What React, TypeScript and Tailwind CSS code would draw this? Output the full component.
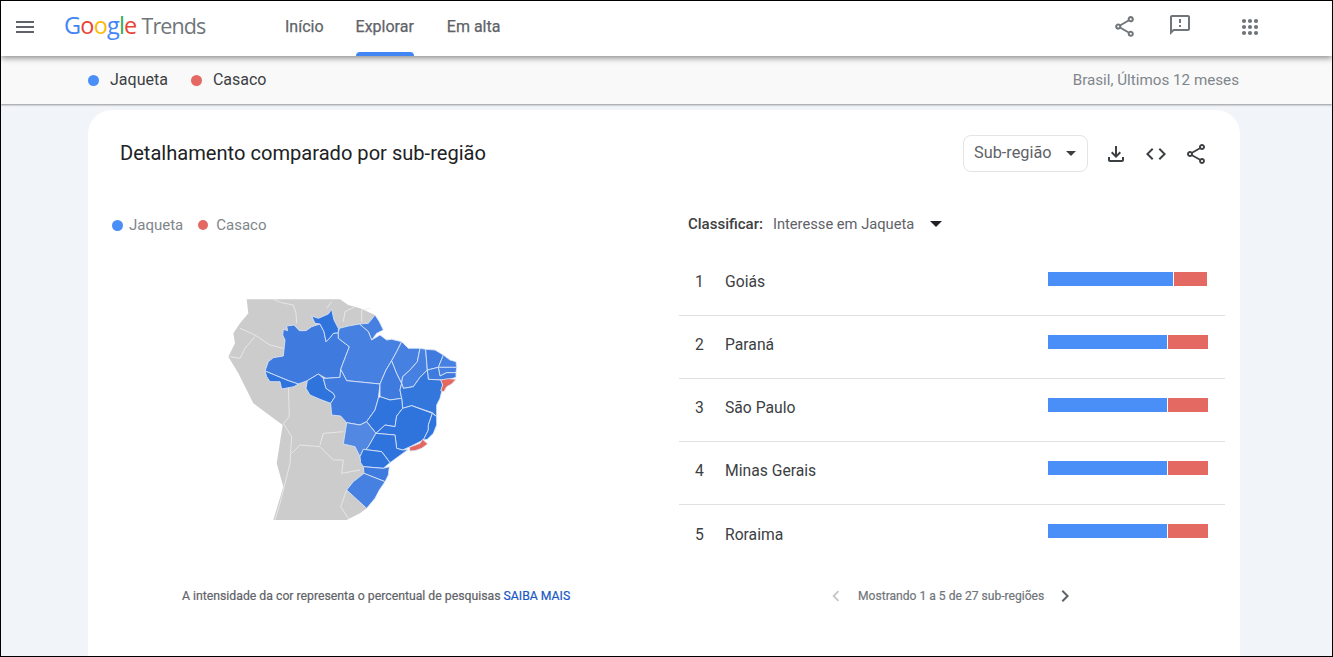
import React from 'react';

const FONT = "font-['Roboto','Noto_Sans',sans-serif]";

const BASE = '#3f7bdf';
const LIGHT = '#4680e0';
const DARK = '#2f73dd';
const RED = '#e4685f';

const states: { d: string; fill: string }[] = [
  { d: 'M190,118 L203,122 200,108 222,105 238,122 258,122 275,110 300,102 312,125 318,155 330,143 340,130 355,128 355,145 388,170 362,238 360,262 318,265 295,252 262,272 235,282 205,272 135,243 145,215 160,203 190,198 195,150 188,135 Z', fill: BASE },
  { d: 'M275,78 L295,85 325,72 335,58 342,90 355,115 355,128 340,130 330,143 318,155 312,125 300,102 285,100 Z', fill: DARK },
  { d: 'M418,102 L445,100 465,75 478,95 490,120 470,130 455,150 445,125 430,112 Z', fill: LIGHT },
  { d: 'M355,128 L358,115 385,108 418,102 430,112 445,125 455,150 480,135 500,150 515,148 545,155 530,185 515,212 498,240 480,282 380,272 362,238 388,170 355,145 Z', fill: LIGHT },
  { d: 'M135,243 L205,272 235,282 222,290 185,297 180,275 150,275 140,260 Z', fill: DARK },
  { d: 'M262,272 L295,252 310,265 318,295 340,310 345,320 332,340 300,328 270,315 258,295 Z', fill: DARK },
  { d: 'M318,265 L360,262 362,238 380,272 480,282 475,325 465,360 440,395 420,405 380,398 362,378 335,375 332,340 345,320 340,310 318,295 310,265 Z', fill: BASE },
  { d: 'M515,212 L530,250 545,280 540,300 545,325 510,330 480,320 480,282 498,240 Z', fill: BASE },
  { d: 'M545,155 L565,175 600,175 592,215 570,240 548,260 545,280 530,250 515,212 530,185 Z', fill: LIGHT },
  { d: 'M600,175 L617,178 622,240 600,262 580,290 550,295 545,280 548,260 570,240 592,215 Z', fill: LIGHT },
  { d: 'M617,178 L645,180 670,195 655,232 622,240 Z', fill: BASE },
  { d: 'M670,195 L690,210 708,215 710,232 655,232 Z', fill: LIGHT },
  { d: 'M655,232 L710,232 708,248 680,248 660,258 Z', fill: LIGHT },
  { d: 'M622,240 L655,232 660,258 680,248 708,248 708,262 680,270 665,270 625,268 Z', fill: BASE },
  { d: 'M545,325 L540,300 545,280 550,295 580,290 600,262 622,240 625,268 665,270 668,285 665,305 660,325 650,345 650,380 637,368 575,347 548,355 Z', fill: '#3377dd' },
  { d: 'M480,320 L510,330 545,325 548,355 530,378 525,410 495,405 468,430 440,395 465,360 475,325 Z', fill: DARK },
  { d: 'M548,355 L575,347 637,370 625,405 625,420 610,450 570,470 548,480 530,475 525,435 468,430 495,405 525,410 530,378 Z', fill: DARK },
  { d: 'M637,370 L650,380 650,405 640,430 622,448 610,450 625,420 625,405 Z', fill: DARK },
  { d: 'M380,398 L420,405 440,395 468,430 445,470 420,500 405,470 370,462 Z', fill: '#5288e2' },
  { d: 'M468,430 L525,435 530,475 548,480 565,478 510,518 485,485 430,478 420,500 445,470 Z', fill: DARK },
  { d: 'M430,478 L485,485 510,518 490,535 430,530 422,518 420,500 Z', fill: DARK },
  { d: 'M430,530 L490,535 508,530 505,555 495,575 432,550 Z', fill: BASE },
  { d: 'M432,550 L495,575 478,600 465,625 440,655 380,600 400,575 Z', fill: LIGHT },
  { d: 'M662,270 L685,266 708,268 695,282 680,290 672,305 662,302 668,285 Z', fill: RED },
  { d: 'M568,472 L600,460 608,448 623,462 605,475 585,482 570,483 Z', fill: RED },
];

const borders = [
  'M160,28 L185,38 220,45 228,70 230,100',
  'M320,55 L335,35',
  'M370,95 L375,65 405,50',
  'M425,95 L425,60 450,55',
  'M60,115 L105,135 150,165 190,175',
  'M30,200 L60,205 75,175 105,140',
  'M205,280 L208,380 190,400',
  'M190,400 L215,440 210,520 180,640 165,690',
  'M300,465 L310,430 370,425',
  'M215,490 L240,465 300,470 340,510 370,510 365,550 420,540',
  'M380,600 L362,650 385,685',
];

const rows = [
  { name: 'Goiás', blue: 125, red: 33 },
  { name: 'Paraná', blue: 119, red: 40 },
  { name: 'São Paulo', blue: 119, red: 40 },
  { name: 'Minas Gerais', blue: 119, red: 40 },
  { name: 'Roraima', blue: 119, red: 40 },
];

const Icon: React.FC<{ d: string; className: string }> = ({ d, className }) => (
  <svg viewBox="0 0 24 24" className={className} fill="currentColor">
    <path d={d} />
  </svg>
);

const SHARE =
  'M18 16.08c-.76 0-1.44.3-1.96.77L8.91 12.7c.05-.23.09-.46.09-.7s-.04-.47-.09-.7l7.05-4.11c.54.5 1.25.81 2.04.81 1.66 0 3-1.34 3-3s-1.34-3-3-3-3 1.34-3 3c0 .24.04.47.09.7L8.04 9.81C7.5 9.31 6.79 9 6 9c-1.66 0-3 1.34-3 3s1.34 3 3 3c.79 0 1.5-.31 2.04-.81l7.12 4.16c-.05.21-.08.43-.08.65 0 1.61 1.31 2.92 2.92 2.92 1.61 0 2.92-1.31 2.92-2.92s-1.31-2.92-2.92-2.92zM18 4c.55 0 1 .45 1 1s-.45 1-1 1-1-.45-1-1 .45-1 1-1zM6 13c-.55 0-1-.45-1-1s.45-1 1-1 1 .45 1 1-.45 1-1 1zm12 7.02c-.55 0-1-.45-1-1s.45-1 1-1 1 .45 1 1-.45 1-1 1z';
const FEEDBACK =
  'M20 2H4c-1.1 0-1.99.9-1.99 2L2 22l4-4h14c1.1 0 2-.9 2-2V4c0-1.1-.9-2-2-2zm0 14H5.17L4 17.17V4h16v12zm-9-4h2v2h-2zm0-6h2v4h-2z';
const DOWNLOAD =
  'M18 15v3H6v-3H4v3c0 1.1.9 2 2 2h12c1.1 0 2-.9 2-2v-3h-2zm-1-4l-1.41-1.41L13 12.17V4h-2v8.17L8.41 9.59 7 11l5 5 5-5z';
const CODE =
  'M9.4 16.6L4.8 12l4.6-4.6L8 6l-6 6 6 6 1.4-1.4zm5.2 0l4.6-4.6-4.6-4.6L16 6l6 6-6 6-1.4-1.4z';
const CHEVRON_LEFT = 'M15.41 7.41L14 6l-6 6 6 6 1.41-1.41L10.83 12z';
const CHEVRON_RIGHT = 'M10 6L8.59 7.41 13.17 12l-4.58 4.59L10 18l6-6z';

const BrazilMap: React.FC = () => (
  <svg viewBox="0 0 750 720" className="w-[250px] h-[240px] block">
    <path
      d="M80,28 L360,28 385,45 420,55 465,75 440,655 420,670 380,690 160,690 190,590 170,520 188,405 140,370 100,340 55,250 25,200 45,160 40,130 60,100 85,70 Z"
      fill="#cccccc"
    />
    {borders.map((d) => (
      <path key={d} d={d} fill="none" stroke="#ececec" strokeWidth="2.5" />
    ))}
    {states.map((s) => (
      <path key={s.d} d={s.d} fill={s.fill} stroke="#dbe6f8" strokeWidth="2.5" strokeLinejoin="round" />
    ))}
  </svg>
);

export default function App() {
  return (
    <div className={`${FONT} w-[1333px] h-[657px] overflow-hidden border border-black bg-[#f1f4f9] flex flex-col`}>
      <header className="relative z-20 h-[55px] shrink-0 bg-white flex items-center shadow-[0_2px_6px_rgba(0,0,0,0.45)]">
        <svg viewBox="0 0 24 24" className="ml-[12px] -mt-[4px] w-[24px] h-[24px] text-[#5f6368]" fill="currentColor">
          <path d="M3 18h18v-2H3v2zm0-5h18v-2H3v2zm0-7v2h18V6H3z" />
        </svg>
        <div className="ml-[27px] w-[142px] flex items-baseline leading-none font-['Open_Sans',sans-serif] -mt-[5px]">
          <span className="text-[23.5px] tracking-[-0.8px] font-medium">
            <span className="text-[#4285f4]">G</span>
            <span className="text-[#ea4335]">o</span>
            <span className="text-[#fbbc05]">o</span>
            <span className="text-[#4285f4]">g</span>
            <span className="text-[#34a853]">l</span>
            <span className="text-[#ea4335]">e</span>
          </span>
          <span className="ml-[5px] text-[21.5px] tracking-[-0.9px] text-[#70757a]">Trends</span>
        </div>
        <nav className="ml-[79px] flex h-full text-[16px] text-[#5f6368] gap-[32px] [-webkit-text-stroke:0.25px]">
          <a className="flex items-center pb-[4px]">Início</a>
          <a className="relative flex items-center pb-[4px]">
            Explorar
            <span className="absolute left-0 right-0 bottom-0 h-[4px] rounded-t-[4px] bg-[#4285f4]" />
          </a>
          <a className="ml-[1px] flex items-center pb-[4px]">Em alta</a>
        </nav>
        <div className="ml-auto mr-[73px] -mt-[4px] flex items-center gap-[31px] text-[#70757a]">
          <Icon d={SHARE} className="w-[25px] h-[25px]" />
          <Icon d={FEEDBACK} className="w-[24px] h-[24px] -mt-[4px]" />
          <svg viewBox="0 0 18 18" className="ml-[18px] w-[18px] h-[18px]" fill="currentColor">
            {[3, 9, 15].map((y) =>
              [3, 9, 15].map((x) => <circle key={`${x}-${y}`} cx={x} cy={y} r="2.1" />)
            )}
          </svg>
        </div>
      </header>

      <div className="relative z-10 h-[48px] shrink-0 bg-[#f9f9f9] flex items-center pl-[87px] pr-[93px] text-[16px] text-[#3c4043] shadow-[0_1px_2px_rgba(0,0,0,0.4)]">
        <span className="w-[11px] h-[11px] rounded-full bg-[#4a8ef8]" />
        <span className="ml-[11px]">Jaqueta</span>
        <span className="ml-[23px] w-[11px] h-[11px] rounded-full bg-[#e46962]" />
        <span className="ml-[11px]">Casaco</span>
        <span className="ml-auto text-[15.2px] text-[#80868b]">Brasil, Últimos 12 meses</span>
      </div>

      <main className="flex-1 min-h-0 pt-[6px] pl-[87px]">
        <section className="w-[1152px] h-[560px] bg-white rounded-t-[24px]">
          <div className="flex items-center h-[62px] pt-[25px] px-[32px]">
            <h2 className="text-[20.1px] text-[#202124]">Detalhamento comparado por sub-região</h2>
            <div className="ml-auto w-[125px] h-[37px] border border-[#e3e4e6] rounded-[8px] flex items-center pl-[10px] pr-[11px] text-[16.3px] text-[#5f6368]">
              Sub-região
              <span className="ml-auto w-0 h-0 border-x-[5px] border-x-transparent border-t-[5px] border-t-[#3c4043]" />
            </div>
            <div className="ml-[16px] flex gap-[16px] text-[#3c4043]">
              <Icon d={DOWNLOAD} className="w-[24px] h-[24px]" />
              <Icon d={CODE} className="w-[24px] h-[24px]" />
              <Icon d={SHARE} className="w-[24px] h-[24px]" />
            </div>
          </div>

          <div className="flex">
            <div className="w-[591px] shrink-0">
              <div className="mt-[43px] h-[20px] pl-[24px] flex items-center text-[15px] text-[#80868b]">
                <span className="w-[11px] h-[11px] rounded-full bg-[#4a8ef8]" />
                <span className="ml-[6px]">Jaqueta</span>
                <span className="ml-[15px] w-[10px] h-[10px] rounded-full bg-[#e46962]" />
                <span className="ml-[8px]">Casaco</span>
              </div>
              <div className="mt-[55px] ml-[132px]">
                <BrazilMap />
              </div>
              <p className="mt-[58px] ml-[94px] text-[12.25px] text-[#5f6368] leading-[16px] [-webkit-text-stroke:0.2px]">
                A intensidade da cor representa o percentual de pesquisas{' '}
                <span className="text-[#1a56c4]">SAIBA MAIS</span>
              </p>
            </div>

            <div className="w-[546px] shrink-0">
              <div className="mt-[42px] h-[20px] pl-[9px] flex items-center text-[#5f6368]">
                <span className="text-[15px] font-medium text-[#3c4043]">Classificar:</span>
                <span className="ml-[10px] text-[14.7px]">Interesse em Jaqueta</span>
                <span className="ml-[16px] w-0 h-0 border-x-[6px] border-x-transparent border-t-[6px] border-t-[#202124]" />
              </div>
              <ul className="mt-[19px]">
                {rows.map((r, i) => (
                  <li
                    key={r.name}
                    className={`h-[63px] pb-[4px] flex items-center text-[15.7px] text-[#3c4043] ${i < 4 ? 'border-b border-[#e0e0e0]' : ''}`}
                  >
                    <span className="w-[46px] pl-[16px]">{i + 1}</span>
                    <span>{r.name}</span>
                    <span className="ml-auto mr-[17px] w-[160px] flex gap-[1px] h-[14px] -mt-[7px]">
                      <span className="bg-[#4a8ef8]" style={{ width: r.blue }} />
                      <span className="bg-[#e46962]" style={{ width: r.red }} />
                    </span>
                  </li>
                ))}
              </ul>
              <div className="mt-[16px] ml-[146px] h-[24px] flex items-center text-[12.1px] text-[#70757a] [-webkit-text-stroke:0.2px]">
                <Icon d={CHEVRON_LEFT} className="w-[22px] h-[22px] text-[#c4c7ca]" />
                <span className="ml-[11px]">Mostrando 1 a 5 de 27 sub-regiões</span>
                <Icon d={CHEVRON_RIGHT} className="ml-[9px] w-[24px] h-[24px] text-[#5f6368]" />
              </div>
            </div>
          </div>
        </section>
      </main>
    </div>
  );
}
